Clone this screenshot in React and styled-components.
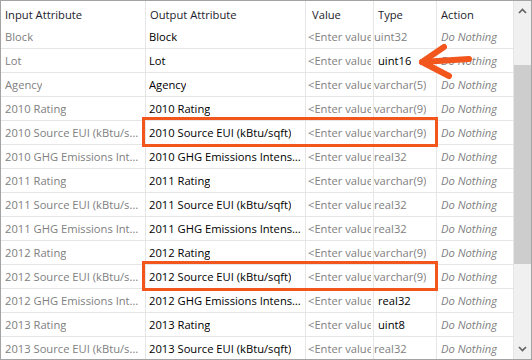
import React from "react";
import styled, { createGlobalStyle } from "styled-components";

const Global = createGlobalStyle`
  html, body { margin: 0; padding: 0; background: #fff; }
  body { font-family: "Open Sans", "Noto Sans", sans-serif; }
`;

const COLS = [145, 160, 68, 63, 77];

const Frame = styled.div`
  position: relative;
  width: 532px;
  height: 360px;
  box-sizing: border-box;
  border: 1px solid #a3a3a3;
  display: flex;
  overflow: hidden;
  background: #fff;
`;

const Table = styled.div`
  width: 513px;
  display: flex;
  flex-direction: column;
  overflow: hidden;
`;

const Row = styled.div`
  display: grid;
  grid-template-columns: ${COLS.map((c) => c + "px").join(" ")};
  height: 24px;
  flex: none;
  box-sizing: border-box;
  border-bottom: ${(p) => (p.$header ? "none" : "1px solid #e6e6e6")};
`;

const Cell = styled.div`
  box-sizing: border-box;
  border-right: 1px solid #e6e6e6;
  display: flex;
  align-items: center;
  padding-left: ${(p) => p.$pl ?? 4}px;
  padding-right: 2px;
  padding-top: ${(p) => (p.$header ? 4 : 1)}px;
  font-size: 11.2px;
  line-height: 16px;
  color: ${(p) => p.$color || "#000"};
  font-style: ${(p) => (p.$italic ? "italic" : "normal")};
  white-space: nowrap;
  overflow: hidden;
  min-width: 0;
`;

const Text = styled.span`
  overflow: hidden;
  text-overflow: ${(p) => (p.$clip ? "clip" : "ellipsis")};
  white-space: nowrap;
  display: block;
  min-width: 0;
`;

const Scrollbar = styled.div`
  width: 17px;
  display: flex;
  flex-direction: column;
  background: #f0f0f0;
`;

const ScrollButton = styled.div`
  height: 20px;
  flex: none;
  display: flex;
  align-items: center;
  justify-content: center;
`;

const Track = styled.div`
  flex: 1;
  position: relative;
  padding-top: ${(p) => p.$top}px;
`;

const Thumb = styled.div`
  height: ${(p) => p.$h}px;
  background: #cdcdcd;
`;

const Highlight = styled.div`
  position: absolute;
  left: 141px;
  top: ${(p) => p.$top}px;
  width: 296px;
  height: 30px;
  box-sizing: border-box;
  border: 3px solid #f2561d;
  pointer-events: none;
`;

const Arrow = styled.svg`
  position: absolute;
  left: 0;
  top: 0;
  pointer-events: none;
`;

const GRAY = "#808080";
const DARK = "#1c1c2c";

const rows = [
  ["Block", "Block", "uint32", false],
  ["Lot", "Lot", "uint16", true],
  ["Agency", "Agency", "varchar(5)", false],
  ["2010 Rating", "2010 Rating", "varchar(9)", false],
  ["2010 Source EUI (kBtu/sqft)", "2010 Source EUI (kBtu/sqft)", "varchar(9)", false],
  ["2010 GHG Emissions Intensity (kgCO2e/sqft)", "2010 GHG Emissions Intensity (kgCO2e/sqft)", "real32", false],
  ["2011 Rating", "2011 Rating", "varchar(9)", false],
  ["2011 Source EUI (kBtu/sqft)", "2011 Source EUI (kBtu/sqft)", "real32", false],
  ["2011 GHG Emissions Intensity (kgCO2e/sqft)", "2011 GHG Emissions Intensity (kgCO2e/sqft)", "real32", false],
  ["2012 Rating", "2012 Rating", "varchar(9)", false],
  ["2012 Source EUI (kBtu/sqft)", "2012 Source EUI (kBtu/sqft)", "varchar(9)", false],
  ["2012 GHG Emissions Intensity (kgCO2e/sqft)", "2012 GHG Emissions Intensity (kgCO2e/sqft)", "real32", true],
  ["2013 Rating", "2013 Rating", "uint8", true],
  ["2013 Source EUI (kBtu/sqft)", "2013 Source EUI (kBtu/sqft)", "real32", false],
];

const Chevron = ({ up }) => (
  <svg width="9" height="6" viewBox="0 0 9 6">
    <path
      d={up ? "M1 5 L4.5 1.5 L8 5" : "M1 1 L4.5 4.5 L8 1"}
      fill="none"
      stroke="#606060"
      strokeWidth="1.6"
    />
  </svg>
);

export default function App() {
  return (
    <>
      <Global />
      <Frame>
        <Table>
          <Row $header>
            <Cell $header $color={DARK}>Input Attribute</Cell>
            <Cell $header $color={DARK}>Output Attribute</Cell>
            <Cell $header $color={DARK} $pl={6}>Value</Cell>
            <Cell $header $color={DARK}>Type</Cell>
            <Cell $header $color={DARK}>Action</Cell>
          </Row>
          {rows.map(([inp, out, type, dark], i) => (
            <Row key={i}>
              <Cell $color={GRAY}><Text>{inp}</Text></Cell>
              <Cell $color="#000" $pl={3}><Text>{out}</Text></Cell>
              <Cell $color={GRAY} $pl={2}><Text $clip>&lt;Enter value&gt;</Text></Cell>
              <Cell $color={dark ? "#000" : GRAY} $pl={dark ? 4 : 0}><Text>{type}</Text></Cell>
              <Cell $color={GRAY} $italic><Text>Do Nothing</Text></Cell>
            </Row>
          ))}
        </Table>
        <Scrollbar>
          <ScrollButton><Chevron up /></ScrollButton>
          <Track $top={44}>
            <Thumb $h={199} />
          </Track>
          <ScrollButton><Chevron /></ScrollButton>
        </Scrollbar>
        <Highlight $top={116} />
        <Highlight $top={260} />
        <Arrow width="532" height="360" viewBox="0 0 532 360">
          <g fill="none" stroke="#f2561d" strokeWidth="6" strokeLinecap="round" strokeLinejoin="round">
            <path d="M468 58 L421 61" />
            <path d="M443 46 L421 61 L448 75" />
          </g>
        </Arrow>
      </Frame>
    </>
  );
}
